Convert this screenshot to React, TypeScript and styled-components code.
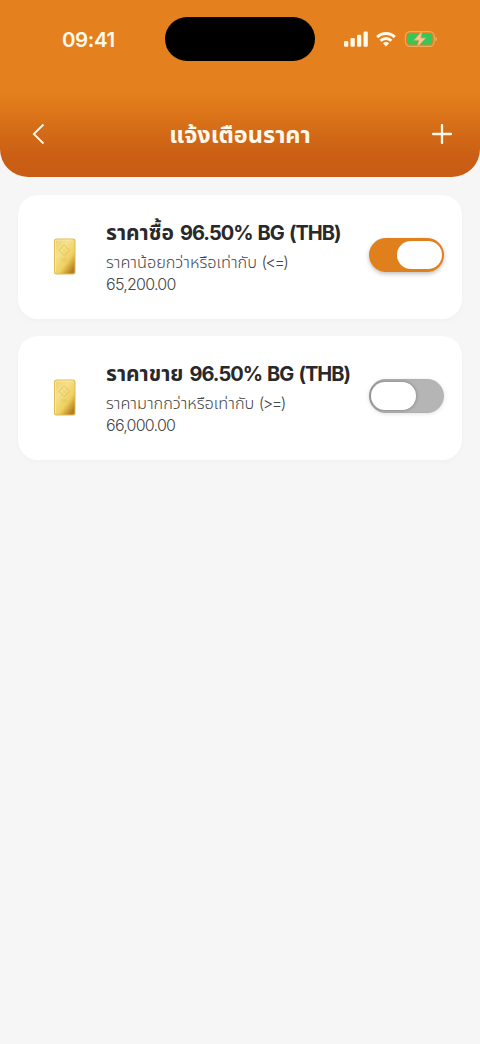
import React, { useState } from "react";
import styled, { createGlobalStyle } from "styled-components";

const GlobalStyle = createGlobalStyle`
  * { box-sizing: border-box; }
  body {
    margin: 0;
    background: #f6f6f6;
    font-family: Inter, "Noto Sans Thai", "Noto Sans", sans-serif;
  }
`;

const Screen = styled.main`
  width: 480px;
  min-height: 1044px;
  background: #f6f6f6;
`;

const Header = styled.header`
  height: 177px;
  border-radius: 0 0 28px 28px;
  color: #fff9ec;
  background: linear-gradient(to bottom, #e4801d 0, #e4801d 94px, #d87018 122px, #c95e14 158px, #c95c14 177px);
`;

const StatusBar = styled.div`
  display: grid;
  grid-template-columns: 165px 150px 165px;
  height: 78px;
  padding-top: 17px;
`;

const Clock = styled.time`
  padding-left: 62px;
  font-size: 20.5px;
  font-weight: 600;
  line-height: 45px;
  letter-spacing: -0.4px;
`;

const Island = styled.div`
  height: 44px;
  border-radius: 22px;
  background: #000;
`;

const StatusIcons = styled.div`
  display: flex;
  align-items: center;
  gap: 8px;
  height: 44px;
  padding-left: 29px;
`;

const NavBar = styled.nav`
  display: grid;
  grid-template-columns: 60px 1fr 60px;
  align-items: center;
  height: 99px;
  padding: 0 8px 0 8px;
`;

const IconButton = styled.button<{ $end?: boolean }>`
  display: flex;
  align-items: center;
  justify-content: ${(p) => (p.$end ? "flex-end" : "flex-start")};
  height: 44px;
  margin-top: 13px;
  padding: ${(p) => (p.$end ? "0 20px 0 0" : "0 0 0 24px")};
  border: 0;
  background: none;
  color: inherit;
`;

const Title = styled.h1`
  margin: 15px 0 0;
  text-align: center;
  font-size: 23.5px;
  font-weight: 700;
  line-height: 40px;
  white-space: nowrap;
`;

const List = styled.section`
  display: flex;
  flex-direction: column;
  gap: 17.5px;
  padding: 18px;
`;

const Card = styled.article`
  display: flex;
  align-items: center;
  height: 123.5px;
  padding: 0 18px 0 35px;
  border-radius: 20px;
  background: #fff;
  box-shadow: 0 2px 6px rgba(0, 0, 0, 0.025);
`;

const Details = styled.div`
  flex: 1;
  min-width: 0;
  margin-left: 29px;
  padding-bottom: 3px;
  color: #464646;
  white-space: nowrap;
`;

const Name = styled.h2`
  margin: 0;
  color: #29292b;
  font-size: 20px;
  font-weight: 700;
  line-height: 35px;
  word-spacing: 1.3px;
`;

const Line = styled.p`
  margin: 0;
  font-size: 16px;
  font-weight: 300;
  line-height: 22px;
`;

const Run = styled.span<{ $track?: number; $size?: number; $weight?: number }>`
  letter-spacing: ${(p) => p.$track ?? 0}px;
  font-size: ${(p) => (p.$size ? `${p.$size}px` : "inherit")};
  font-weight: ${(p) => p.$weight ?? "inherit"};
`;

const Toggle = styled.button<{ $on: boolean }>`
  display: flex;
  flex: none;
  align-items: center;
  justify-content: ${(p) => (p.$on ? "flex-end" : "flex-start")};
  width: 75.5px;
  height: 33.5px;
  margin-top: -3.5px;
  padding: 2px;
  border: 0;
  border-radius: 17px;
  background: ${(p) => (p.$on ? "#e0801d" : "#b5b5b6")};
  box-shadow: ${(p) =>
    p.$on ? "0 2px 4px rgba(0,0,0,.25)" : "0 1px 4px rgba(0,0,0,.12), inset 2px 0 2px rgba(0,0,0,.1)"};
`;

const Knob = styled.span<{ $on: boolean }>`
  width: 45px;
  height: 28.5px;
  border-radius: 15px;
  background: #fff;
  box-shadow: ${(p) => (p.$on ? "none" : "0 0 3px 1px rgba(0,0,0,.2)")};
`;

const GoldBar = ({ id }: { id: string }) => (
  <svg width="24" height="38" viewBox="0 0 24 38">
    <defs>
      <linearGradient id={id} x1="0" y1="0" x2=".8" y2="1">
        <stop offset="0" stopColor="#eed271" />
        <stop offset=".35" stopColor="#f6e08a" />
        <stop offset=".7" stopColor="#eecf60" />
        <stop offset=".87" stopColor="#cda036" />
        <stop offset="1" stopColor="#b37d24" />
      </linearGradient>
    </defs>
    <rect x="1" y=".6" width="21.5" height="36" rx="2.5" fill="#e0bb55" />
    <rect x="2" y="1.6" width="19.5" height="34" rx="1.8" fill={`url(#${id})`} />
    <path d="M2.5 34.6V3.1q0-1 1-1H20" fill="none" stroke="#faedb4" strokeWidth=".8" />
    <path d="M11.2 7l5.4 5.3-5.4 5.4-5.4-5.4z" fill="none" stroke="#dcbb4c" strokeWidth=".9" opacity=".8" />
    <path d="M8.5 9.7l5.4 5.3M13.9 9.7L8.5 15" fill="none" stroke="#dcbb4c" strokeWidth=".8" opacity=".35" />
    <path d="M8 21h6.5M9 23h5" stroke="#dcbb4c" strokeWidth="1" opacity=".5" />
  </svg>
);

const Signal = () => (
  <svg width="24" height="16" viewBox="0 0 24 16" fill="currentColor">
    <rect x="0" y="10" width="4.3" height="5.8" rx="1.3" />
    <rect x="6.5" y="7" width="4.3" height="8.8" rx="1.3" />
    <rect x="13" y="3.8" width="4.3" height="12" rx="1.3" />
    <rect x="19.5" y="0.6" width="4.3" height="15.2" rx="1.3" />
  </svg>
);

const Wifi = () => (
  <svg width="20" height="16" viewBox="0 0 20 16" fill="none" stroke="currentColor" strokeWidth="2.9">
    <path d="M1.2 6.1a12.5 12.5 0 0 1 17.6 0" />
    <path d="M4.6 9.7a7.7 7.7 0 0 1 10.8 0" />
    <path d="M10 15.4l-3.1-3.1a4.4 4.4 0 0 1 6.2 0z" fill="currentColor" stroke="none" />
  </svg>
);

const Battery = () => (
  <svg width="34" height="18" viewBox="0 0 34 18">
    <rect x="1.4" y="1.6" width="28.8" height="14.8" rx="4.6" fill="none" stroke="#eeaa60" strokeWidth="1.2" />
    <rect x="3.3" y="3.5" width="25" height="11" rx="2.8" fill="#34c759" />
    <path d="M31.5 7c2 .6 2 3.4 0 4z" fill="#f0b26c" />
    <path d="M18.4.8L9.8 10.2h5l-1.8 7.2 9-9.5h-5.2z" fill="#ffc590" stroke="#e09b4c" strokeWidth=".8" />
  </svg>
);

type Alert = {
  id: string;
  name: string;
  product: string;
  rule: string;
  sign: string;
  price: string;
  on: boolean;
};

const alerts: Alert[] = [
  { id: "buy", name: "ราคาซื้อ", product: "96.50% BG (THB)", rule: "ราคาน้อยกว่าหรือเท่ากับ", sign: "(<=)", price: "65,200.00", on: true },
  { id: "sell", name: "ราคาขาย", product: "96.50% BG (THB)", rule: "ราคามากกว่าหรือเท่ากับ", sign: "(>=)", price: "66,000.00", on: false },
];

const AlertCard = ({ alert }: { alert: Alert }) => {
  const [on, setOn] = useState(alert.on);
  return (
    <Card>
      <GoldBar id={`gold-${alert.id}`} />
      <Details>
        <Name>
          <Run $size={21}>{alert.name}</Run> <Run $track={-0.98} $weight={680}>{alert.product}</Run>
        </Name>
        <Line>
          <Run $size={16.3}>{alert.rule}</Run> <Run $track={-1.5}>{alert.sign}</Run>
        </Line>
        <Line>
          <Run $track={-0.75}>{alert.price}</Run>
        </Line>
      </Details>
      <Toggle $on={on} role="switch" aria-checked={on} onClick={() => setOn(!on)}>
        <Knob $on={on} />
      </Toggle>
    </Card>
  );
};

export default function App() {
  return (
    <Screen>
      <GlobalStyle />
      <Header>
        <StatusBar>
          <Clock>09:41</Clock>
          <Island />
          <StatusIcons>
            <Signal />
            <Wifi />
            <Battery />
          </StatusIcons>
        </StatusBar>
        <NavBar>
          <IconButton>
            <svg width="14" height="22" viewBox="0 0 14 22" fill="none" stroke="currentColor" strokeWidth="1.8">
              <path d="M11.5 1.5L1.8 11l9.7 9.5" />
            </svg>
          </IconButton>
          <Title>แจ้งเตือนราคา</Title>
          <IconButton $end>
            <svg width="20" height="20" viewBox="0 0 20 20" stroke="currentColor" strokeWidth="2.3" strokeLinecap="round">
              <path d="M10 1.1v17.8M1.1 10h17.8" />
            </svg>
          </IconButton>
        </NavBar>
      </Header>
      <List>
        {alerts.map((a) => (
          <AlertCard key={a.id} alert={a} />
        ))}
      </List>
    </Screen>
  );
}
